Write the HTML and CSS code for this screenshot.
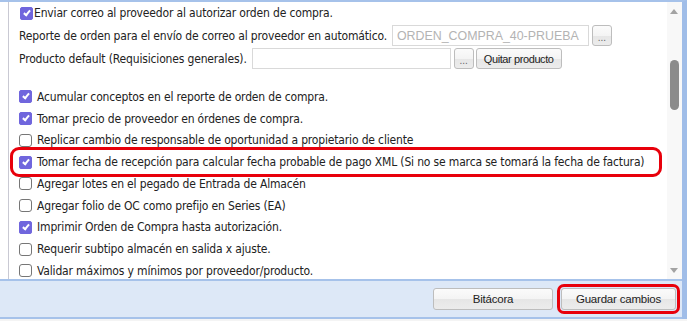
FILE: index.html
```html
<!DOCTYPE html>
<html lang="es">
<head>
    <meta charset="UTF-8">
    <title>Configuración de compras</title>
    <link rel="stylesheet" href="styles.css">
</head>
<body>

    <div class="window">
        <div class="content">
            <div class="list">
                <div class="row first">
                    <span class="check on"></span>
                    <span class="label">Enviar correo al proveedor al autorizar orden de compra.</span>
                </div>
                <div class="row field">
                    <span class="label">Reporte de orden para el envío de correo al proveedor en automático.</span>
                    <input class="text-input report" type="text" value="ORDEN_COMPRA_40-PRUEBA" readonly>
                    <button class="btn small">...</button>
                </div>
                <div class="row field">
                    <span class="label">Producto default (Requisiciones generales).</span>
                    <input class="text-input product" type="text" readonly>
                    <button class="btn small">...</button>
                    <button class="btn quit">Quitar producto</button>
                </div>

                <div class="options">
                    <div class="row"><span class="check on"></span><span class="label">Acumular conceptos en el reporte de orden de compra.</span></div>
                    <div class="row"><span class="check on"></span><span class="label">Tomar precio de proveedor en órdenes de compra.</span></div>
                    <div class="row"><span class="check"></span><span class="label">Replicar cambio de responsable de oportunidad a propietario de cliente</span></div>
                    <div class="row marked"><span class="check on"></span><span class="label">Tomar fecha de recepción para calcular fecha probable de pago XML (Si no se marca se tomará la fecha de factura)</span></div>
                    <div class="row"><span class="check"></span><span class="label">Agregar lotes en el pegado de Entrada de Almacén</span></div>
                    <div class="row"><span class="check"></span><span class="label">Agregar folio de OC como prefijo en Series (EA)</span></div>
                    <div class="row"><span class="check on"></span><span class="label">Imprimir Orden de Compra hasta autorización.</span></div>
                    <div class="row"><span class="check"></span><span class="label">Requerir subtipo almacén en salida x ajuste.</span></div>
                    <div class="row"><span class="check"></span><span class="label">Validar máximos y mínimos por proveedor/producto.</span></div>
                </div>
            </div>

            <div class="scrollbar">
                <span class="arrow up"></span>
                <span class="thumb"></span>
                <span class="arrow down"></span>
            </div>
        </div>

        <div class="footer">
            <button class="btn big">Bitácora</button>
            <button class="btn big save">Guardar cambios</button>
        </div>
    </div>

</body>
</html>
```

FILE: styles.css
```css
*, *::before, *::after {
    margin: 0;
    padding: 0;
    box-sizing: border-box;
}

body {
    background: #f4f4f4;
    font-family: "Liberation Sans", Arial, sans-serif;
    font-size: 13px;
    color: #222;
}

.window {
    width: 687px;
    border-top: 2px solid #a6c2ea;
    border-right: 5px solid #a0bde8;
    background: #fff;
}

.content {
    display: flex;
    height: 277px;
}

.list {
    flex: 1;
    margin-left: 8px;
    padding-left: 10px;
    border-left: 1px solid #c9c9d3;
    overflow: hidden;
}

.row {
    display: flex;
    align-items: center;
    height: 21.75px;
    white-space: nowrap;
    position: relative;
}

.row.first {
    height: 22px;
    padding-left: 1px;
}

.row.first .check {
    margin-right: 1px;
}

.row.field {
    height: 23px;
}

.options {
    margin-top: 16px;
}

.label {
    font-family: "DejaVu Sans Condensed", "DejaVu Sans", sans-serif;
    font-stretch: condensed;
    font-size: 12px;
    letter-spacing: -0.16px;
}

/* checkbox */
.check {
    width: 13px;
    height: 13px;
    border: 1px solid #767676;
    border-radius: 3px;
    background: #fff;
    margin-right: 5px;
    flex-shrink: 0;
    position: relative;
}

.check.on {
    background: #7066dd;
    border-color: #7066dd;
    border-radius: 2px;
}

.check.on::after {
    content: "";
    position: absolute;
    left: 3.5px;
    top: 1px;
    width: 4px;
    height: 7px;
    border: solid #fff;
    border-width: 0 2px 2px 0;
    transform: rotate(40deg);
}

/* red annotation around the row */
.row.marked::before {
    content: "";
    position: absolute;
    left: -9px;
    top: -4px;
    width: 652px;
    height: 30px;
    border: 3px solid #e8000b;
    border-radius: 9px;
}

.text-input {
    height: 21px;
    border: 1px solid #d9d9d9;
    padding: 0 4px;
    font-family: "Liberation Sans", Arial, sans-serif;
    font-size: 12.4px;
    color: #b3b3b3;
    margin-left: 5px;
    outline: none;
}

.text-input.report {
    width: 197px;
}

.text-input.product {
    width: 199px;
}

.btn {
    font-family: "Liberation Sans", Arial, sans-serif;
    font-size: 11.5px;
    letter-spacing: -0.2px;
    color: #222;
    border: 1px solid #bdbdbd;
    border-radius: 3px;
    background: linear-gradient(#fbfbfb 0%, #f4f4f4 50%, #e6e6e6 51%, #ececec 100%);
    cursor: pointer;
}

.btn.small {
    width: 20px;
    height: 21px;
    margin-left: 3px;
    font-size: 10px;
    letter-spacing: 0;
    color: #666;
    padding-top: 4px;
}

.btn.quit {
    width: 86px;
    height: 21px;
    margin-left: 2px;
    font-size: 11px;
    letter-spacing: -0.4px;
}

/* scrollbar */
.scrollbar {
    width: 15px;
    background: #f8f8f8;
    position: relative;
    margin-left: 1px;
}

.arrow {
    position: absolute;
    left: 3px;
    width: 0;
    height: 0;
    border-left: 4.5px solid transparent;
    border-right: 4.5px solid transparent;
}

.arrow.up {
    top: 7px;
    border-bottom: 5px solid #a3a3a3;
}

.arrow.down {
    bottom: 6px;
    border-top: 5px solid #a3a3a3;
}

.thumb {
    position: absolute;
    left: 3px;
    top: 58px;
    width: 9px;
    height: 50px;
    background: #8b8b8b;
    border-radius: 5px;
}

/* footer */
.footer {
    display: flex;
    justify-content: flex-end;
    align-items: center;
    gap: 8px;
    height: 40px;
    padding-right: 6px;
    background: #dde8f7;
    border-top: 2px solid #a6c2ea;
    border-bottom: 2px solid #a6c2ea;
}

.btn.big {
    width: 120px;
    height: 22px;
}

.btn.save {
    width: 115px;
    position: relative;
}

.btn.save::after {
    content: "";
    position: absolute;
    left: -5px;
    top: -5px;
    right: -5px;
    bottom: -5px;
    border: 3px solid #e8000b;
    border-radius: 7px;
}
```
